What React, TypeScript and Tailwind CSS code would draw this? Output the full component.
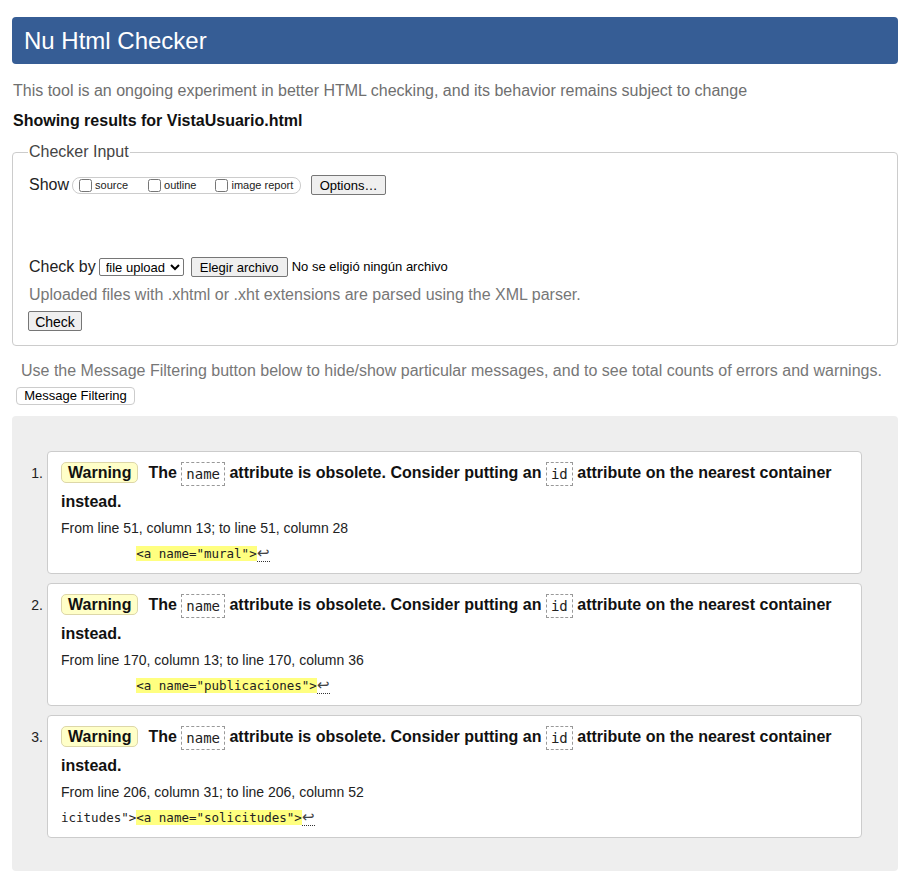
import React from 'react';

type Mensaje = {
  numero: number;
  desde: string;
  antes: string;
  marcado: string;
};

const mensajes: Mensaje[] = [
  {
    numero: 1,
    desde: 'From line 51, column 13; to line 51, column 28',
    antes: '          ',
    marcado: '<a name="mural">',
  },
  {
    numero: 2,
    desde: 'From line 170, column 13; to line 170, column 36',
    antes: '          ',
    marcado: '<a name="publicaciones">',
  },
  {
    numero: 3,
    desde: 'From line 206, column 31; to line 206, column 52',
    antes: 'icitudes">',
    marcado: '<a name="solicitudes">',
  },
];

const mono = "font-['DejaVu_Sans_Mono','Liberation_Mono',monospace]";

function Codigo({ children }: { children: string }) {
  return (
    <code
      className={`${mono} inline-block border border-dashed border-[#999] px-[4px] text-[14px] leading-[22px] font-normal text-[#222] align-middle`}
    >
      {children}
    </code>
  );
}

function Aviso({ m }: { m: Mensaje }) {
  return (
    <li className="flex">
      <span className="w-[35px] shrink-0 text-right pr-[4px] pt-[12px] text-[14px] text-[#222]">
        {m.numero}.
      </span>
      <div className="w-[815px] bg-white border border-[#ccc] rounded-[4px] pl-[13px] pr-[12px] pt-[6px] pb-[10px]">
        <p className="text-[16px] font-bold leading-[29px] text-[#111]">
          <span className="inline-block bg-[#ffffc8] border border-[#ddd7a8] rounded-[5px] px-[6px] leading-[19px] mr-[10px]">
            Warning
          </span>
          The <Codigo>name</Codigo> attribute is obsolete. Consider putting an{' '}
          <Codigo>id</Codigo> attribute on the nearest container instead.
        </p>
        <p className="text-[14px] leading-[18px] mt-[3px] text-[#222]">{m.desde}</p>
        <p className={`${mono} text-[12.5px] leading-[18px] mt-[8px] whitespace-pre text-[#222]`}>
          {m.antes}
          <span className="bg-[#ffff80]">{m.marcado}</span>
          <span className="font-['Liberation_Sans',Arial,sans-serif] text-[15px] leading-[16px] border-b border-dotted border-[#333] text-[#444]">
            ↩
          </span>
        </p>
      </div>
    </li>
  );
}

export default function App() {
  return (
    <div className="min-h-[872px] bg-white px-[12px] pt-[17px] font-['Liberation_Sans',Arial,sans-serif] text-[#222]">
      <h1 className="h-[47px] bg-[#365d95] rounded-[4px] pl-[12px] flex items-center text-white text-[24px]">
        Nu Html Checker
      </h1>

      <p className="mt-[18px] pl-[1px] text-[16px] leading-[18px] text-[#6f6f6f]">
        This tool is an ongoing experiment in better HTML checking, and its behavior remains subject to change
      </p>
      <p className="mt-[12px] pl-[1px] text-[16px] leading-[18px] font-bold text-[#111]">
        Showing results for VistaUsuario.html
      </p>

      <fieldset className="mt-[13px] border border-[#ccc] rounded-[4px] pl-[16px] pr-[16px] pb-[11px]">
        <legend className="ml-[-1px] px-[1px] text-[16px] leading-[18px] text-[#444]">Checker Input</legend>

        <div className="flex items-center mt-[13px] h-[22px]">
          <span className="text-[16px] mr-[3px]">Show</span>
          <div className="flex items-center h-[17px] w-[229px] border border-[#ccc] rounded-[8px] pl-[6px] text-[11px] text-[#222]">
            <label className="flex items-center">
              <input type="checkbox" className="w-[13px] h-[13px] m-0 mr-[3px]" />
              source
            </label>
            <label className="flex items-center ml-[20px]">
              <input type="checkbox" className="w-[13px] h-[13px] m-0 mr-[3px]" />
              outline
            </label>
            <label className="flex items-center ml-[19px]">
              <input type="checkbox" className="w-[13px] h-[13px] m-0 mr-[3px]" />
              image report
            </label>
          </div>
          <button className="ml-[10px] h-[20px] w-[75px] bg-[#efefef] border border-[#767676] rounded-[2px] text-[13px] text-black">
            Options…
          </button>
        </div>

        <div className="h-[60px]" />

        <div className="flex items-center h-[22px]">
          <span className="text-[16px] mr-[3px]">Check by</span>
          <select className="h-[18px] w-[85px] border border-[#767676] rounded-[2px] bg-white text-[13px] text-black pl-[2px] appearance-auto">
            <option>file upload</option>
          </select>
          <button className="ml-[7px] h-[20px] w-[97px] bg-[#efefef] border border-[#767676] rounded-[2px] text-[13px] text-black">
            Elegir archivo
          </button>
          <span className="ml-[4px] text-[13px] text-black">No se eligió ningún archivo</span>
        </div>
        <p className="mt-[8px] text-[16px] leading-[18px] text-[#777]">
          Uploaded files with .xhtml or .xht extensions are parsed using the XML parser.
        </p>
        <button className="mt-[7px] -ml-[1px] h-[20px] w-[54px] bg-[#efefef] border border-[#767676] rounded-[2px] text-[14px] text-black">
          Check
        </button>
      </fieldset>

      <p className="mt-[16px] pl-[9px] text-[16px] leading-[18px] text-[#777]">
        Use the Message Filtering button below to hide/show particular messages, and to see total counts of errors and warnings.
      </p>
      <button className="mt-[7px] ml-[4px] h-[18px] w-[119px] bg-white border border-[#ccc] rounded-[4px] text-[13px] leading-[16px] text-black">
        Message Filtering
      </button>

      <div className="mt-[9px] bg-[#eeeeee] rounded-[4px] pt-[35px] pb-[33px]">
        <ol className="flex flex-col gap-[9px]">
          {mensajes.map((m) => (
            <Aviso key={m.numero} m={m} />
          ))}
        </ol>
      </div>
    </div>
  );
}
